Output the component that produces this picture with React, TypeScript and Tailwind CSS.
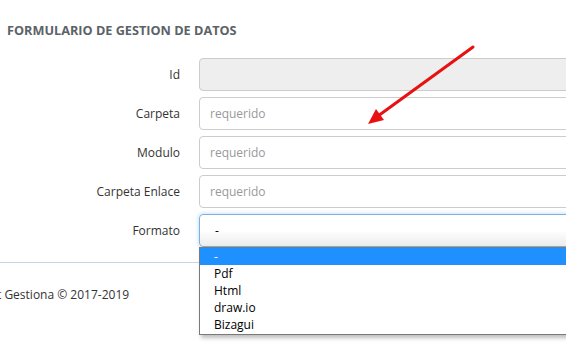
import React from "react";

const font = { fontFamily: '"Open Sans", "Noto Sans", "Liberation Sans", sans-serif' };

const fields = [
  { label: "Id", disabled: true },
  { label: "Carpeta" },
  { label: "Modulo" },
  { label: "Carpeta Enlace" },
];

const options = ["-", "Pdf", "Html", "draw.io", "Bizagui"];

export default function App() {
  return (
    <div
      className="relative h-[349px] w-[566px] overflow-hidden bg-white text-[12px] text-[#333]"
      style={font}
    >
      <div className="border-b border-[#c8d5e5] pb-[15px]">
        <h1 className="pl-[7px] pt-[21px] text-[12.7px] font-bold leading-[18px] text-[#5b6268]">
          FORMULARIO DE GESTION DE DATOS
        </h1>

        <div className="mt-[19px] flex flex-col gap-[6px]">
          {fields.map((f) => (
            <div key={f.label} className="flex items-center">
              <label className="w-[180px] shrink-0 text-right">{f.label}</label>
              <div
                className={`ml-[19px] flex h-[33px] w-[420px] shrink-0 items-center rounded-[4px] border border-[#ccc] pl-[10px] ${
                  f.disabled ? "bg-[#eee]" : "bg-white text-[#999]"
                }`}
              >
                {f.disabled ? "" : "requerido"}
              </div>
            </div>
          ))}

          <div className="flex items-center">
            <label className="w-[180px] shrink-0 text-right">Formato</label>
            <div className="ml-[19px] flex h-[33px] w-[420px] shrink-0 items-center rounded-[4px] border border-[#7fb0e0] bg-gradient-to-b from-white from-50% to-[#ececec] pl-[15px] text-black shadow-[0_0_4px_rgba(102,175,233,0.5)]">
              -
            </div>
          </div>
        </div>
      </div>

      <p className="-ml-[3px] mt-[24px] leading-[16px]">t Gestiona © 2017-2019</p>

      {/* open select list */}
      <ul className="absolute left-[199px] top-[247px] w-[420px] border border-[#7a7a7a] bg-white pb-[1px] text-[12px] leading-[17px] text-black shadow-[2px_3px_4px_rgba(0,0,0,0.25)]">
        {options.map((o, i) => (
          <li
            key={o}
            className={`h-[17px] pl-[14px] ${i === 0 ? "bg-[#1e90ff] text-white" : ""}`}
          >
            {o}
          </li>
        ))}
      </ul>

      {/* annotation arrow */}
      <svg className="absolute left-0 top-0" width="566" height="349">
        <line x1="473" y1="47" x2="378" y2="116" stroke="#e81010" strokeWidth="3" strokeLinecap="round" />
        <polygon points="368,124 376,109 384,120" fill="#e81010" />
      </svg>
    </div>
  );
}
